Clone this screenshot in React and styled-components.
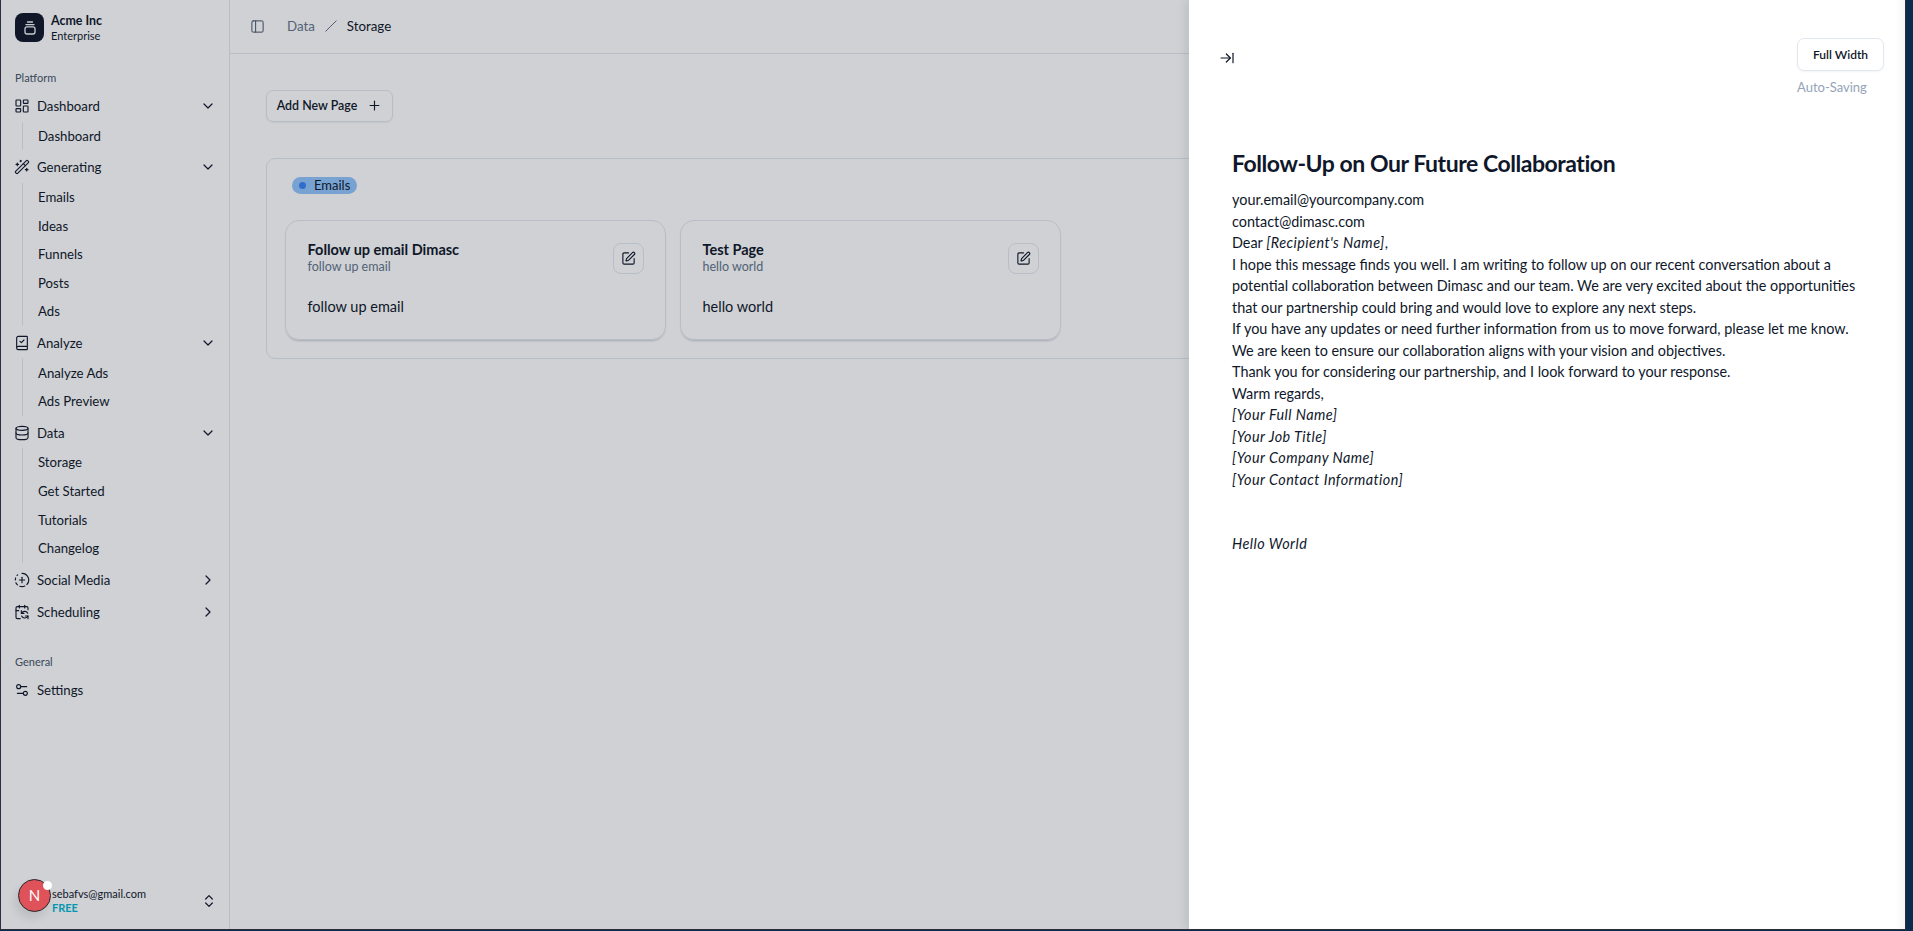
import React from 'react';
import styled, { createGlobalStyle } from 'styled-components';
import {
  LayoutDashboard, WandSparkles, BookCheck, Database, CircleFadingPlus, CalendarSync, Settings2,
  ChevronDown, ChevronRight, ChevronsUpDown, PanelLeft, Plus, SquarePen, ArrowRightToLine,
} from 'lucide-react';

const FONT = `"Lato", "Noto Sans", sans-serif`;

const nav = [
  { label: 'Dashboard', icon: LayoutDashboard, open: true, items: ['Dashboard'] },
  { label: 'Generating', icon: WandSparkles, open: true, items: ['Emails', 'Ideas', 'Funnels', 'Posts', 'Ads'] },
  { label: 'Analyze', icon: BookCheck, open: true, items: ['Analyze Ads', 'Ads Preview'] },
  { label: 'Data', icon: Database, open: true, items: ['Storage', 'Get Started', 'Tutorials', 'Changelog'] },
  { label: 'Social Media', icon: CircleFadingPlus },
  { label: 'Scheduling', icon: CalendarSync },
];

const pages = [
  { title: 'Follow up email Dimasc', sub: 'follow up email', body: 'follow up email' },
  { title: 'Test Page', sub: 'hello world', body: 'hello world' },
];

const Global = createGlobalStyle`
  html, body { margin: 0; padding: 0; height: 100%; overflow: hidden; }
  body { font-family: ${FONT}; color: #0f172a; background: #0b2b4d; }
  #root { height: 100%; }
`;

const Desktop = styled.div`
  width: 1913px;
  height: 931px;
  box-sizing: border-box;
  padding: 0 7px 1px 0;
  background: #0b2b4d;
`;

const Window = styled.div`
  position: relative;
  height: 100%;
  box-sizing: border-box;
  display: flex;
  overflow: hidden;
  background: #fff;
  border: solid #2b2f3f;
  border-width: 0 1px 1px 1px;
`;

const Sidebar = styled.aside`
  flex: 0 0 229px;
  box-sizing: border-box;
  border-right: 1px solid #e2e8f0;
  padding: 13px 0 0 14px;
  display: flex;
  flex-direction: column;
`;

const Brand = styled.div`
  display: flex;
  align-items: center;
  gap: 7px;
  height: 29px;
`;

const BrandMark = styled.div`
  width: 29px;
  height: 29px;
  border-radius: 8px;
  background: #0f172a;
  color: #f8fafc;
  display: flex;
  align-items: center;
  justify-content: center;
`;

const BrandText = styled.div`
  display: flex;
  flex-direction: column;
  line-height: 15px;
  b { font-size: 12.4px; font-weight: 700; }
  span { font-size: 11px; }
`;

const GroupLabel = styled.div`
  font-size: 11px;
  line-height: 14px;
  color: #475569;
  margin-top: ${p => p.$top}px;
  margin-bottom: 6px;
`;

const NavRow = styled.div`
  height: 30px;
  width: 202px;
  margin: 0 0 2.6px -1px;
  display: flex;
  align-items: center;
  gap: 7px;
  font-size: 13.2px;
  color: #0f172a;
  span { flex: 1; }
`;

const SubList = styled.div`
  margin: -2px 0 2px 7px;
  border-left: 1px solid #e2e8f0;
  padding-left: 15px;
`;

const SubItem = styled.div`
  height: 28.6px;
  display: flex;
  align-items: center;
  font-size: 13.2px;
  color: #0f172a;
`;

const User = styled.div`
  margin-top: auto;
  height: 37px;
  width: 202px;
  margin-bottom: 10px;
  display: flex;
  align-items: center;
`;

/* the avatar floats above the dimming layer, it stays bright in the reference */
const Avatar = styled.div`
  position: relative;
  z-index: 1;
  flex: 0 0 33px;
  width: 33px;
  height: 33px;
  margin: -11px 0 0 3px;
  box-sizing: border-box;
  border-radius: 50%;
  background: #e0525a;
  border: 1px solid #27272a;
  color: #fff;
  font-size: 15px;
  display: flex;
  align-items: center;
  justify-content: center;
  box-shadow: -3px 6px 8px rgba(15, 23, 42, .1);
  &::after {
    content: '';
    position: absolute;
    top: 1px;
    right: -2px;
    width: 9px;
    height: 9px;
    border-radius: 50%;
    background: #fff;
  }
`;

const UserText = styled.div`
  flex: 1;
  display: flex;
  flex-direction: column;
  margin-left: 1px;
  line-height: 14px;
  font-size: 11px;
  b { color: #06b6d4; font-weight: 700; font-size: 11px; }
`;

const Main = styled.main`
  flex: 1;
  display: flex;
  flex-direction: column;
`;

const TopBar = styled.header`
  height: 53px;
  flex: none;
  border-bottom: 1px solid #e2e8f0;
  display: flex;
  align-items: center;
  padding-left: 20px;
  font-size: 13.3px;
`;

const Crumbs = styled.nav`
  margin-left: 22px;
  margin-top: -1px;
  display: flex;
  align-items: center;
  gap: 10px;
  color: #64748b;
  strong { font-weight: 400; color: #0f172a; }
`;

const Content = styled.div`
  padding: 36px 0 0 36px;
`;

const AddButton = styled.button`
  font: 600 12.4px ${FONT};
  color: #0f172a;
  height: 31.5px;
  width: 127px;
  border: 1px solid #e2e8f0;
  border-radius: 7px;
  background: #fff;
  display: flex;
  align-items: center;
  justify-content: center;
  gap: 10px;
  padding: 0;
  box-shadow: 0 1px 2px rgba(15, 23, 42, .05);
`;

const Section = styled.section`
  margin-top: 36px;
  border: 1px solid #e2e8f0;
  border-radius: 9px;
  height: 201px;
  box-sizing: border-box;
  padding: 18px 18px 0;
`;

const Tag = styled.div`
  display: flex;
  width: fit-content;
  align-items: center;
  gap: 8px;
  height: 17px;
  padding: 0 7px;
  margin-left: 7px;
  border-radius: 9px;
  background: #93c5fd;
  font-size: 13px;
  &::before {
    content: '';
    width: 7px;
    height: 7px;
    border-radius: 50%;
    background: #3b82f6;
  }
`;

const Cards = styled.div`
  margin-top: 26px;
  display: flex;
  gap: 14px;
`;

const Card = styled.article`
  box-sizing: border-box;
  width: 381px;
  height: 120px;
  border: 1px solid #e2e8f0;
  border-radius: 14px;
  padding: 21px 21.5px 0;
  box-shadow: 0 2px 2px -1px rgba(15, 23, 42, .22);
`;

const CardHead = styled.div`
  display: flex;
  justify-content: space-between;
  align-items: center;
`;

const CardTitle = styled.div`
  font-size: 14.5px;
  font-weight: 700;
  line-height: 16px;
  small {
    display: block;
    font-size: 12.5px;
    font-weight: 400;
    color: #64748b;
    line-height: 17px;
  }
`;

const IconButton = styled.div`
  width: 31px;
  height: 31px;
  box-sizing: border-box;
  border: 1px solid #e2e8f0;
  border-radius: 8px;
  display: flex;
  align-items: center;
  justify-content: center;
`;

const CardBody = styled.p`
  margin: 23px 0 0;
  font-size: 14.5px;
  line-height: 18px;
`;

const Overlay = styled.div`
  position: absolute;
  inset: 0;
  background: rgba(15, 23, 42, .2);
`;

const Sheet = styled.aside`
  position: absolute;
  top: 0;
  bottom: 0;
  right: 0;
  width: 716px;
  box-sizing: border-box;
  background: #fff;
  box-shadow: -3px 0 10px rgba(15, 23, 42, .1), inset -12px 0 10px -10px rgba(15, 23, 42, .07);
  padding: 38px 21px 0 30px;
`;

const SheetBar = styled.div`
  display: flex;
  justify-content: space-between;
  align-items: flex-start;
  svg { margin-top: 11.5px; }
`;

const SheetActions = styled.div`
  display: flex;
  flex-direction: column;
`;

const WidthButton = styled.button`
  font: 600 12px ${FONT};
  color: #0f172a;
  width: 87px;
  height: 33px;
  background: #fff;
  border: 1px solid #e2e8f0;
  border-radius: 7px;
  padding: 0;
  box-shadow: 0 1px 2px rgba(15, 23, 42, .05);
`;

const Saving = styled.div`
  font-size: 13px;
  line-height: 16px;
  margin-top: 8px;
  color: #94a3b8;
`;

const Doc = styled.article`
  margin: 52px 0 0 13px;
  width: 640px;
  font-size: 14.4px;
  line-height: 21.5px;
  h1 {
    font-size: 23px;
    letter-spacing: -.45px;
    line-height: 32px;
    font-weight: 700;
    margin: 0 0 10px;
  }
  p { margin: 0; }
  em { font-style: italic; letter-spacing: .45px; }
`;

const Spacer = styled.div`
  height: 43px;
`;

const BrandIcon = () => (
  <svg width="16" height="16" viewBox="0 0 16 16" fill="none" stroke="currentColor" strokeWidth="1.3" strokeLinecap="round">
    <path d="M5.5 2h5" />
    <path d="M4 4.6h8" />
    <rect x="3" y="6.8" width="10" height="7.2" rx="2" />
  </svg>
);

export default function App() {
  return (
    <Desktop>
      <Global />
      <Window>
        <Sidebar>
          <Brand>
            <BrandMark><BrandIcon /></BrandMark>
            <BrandText><b>Acme Inc</b><span>Enterprise</span></BrandText>
          </Brand>
          <GroupLabel $top={29}>Platform</GroupLabel>
          {nav.map(group => (
            <React.Fragment key={group.label}>
              <NavRow>
                <group.icon size={16} strokeWidth={1.7} />
                <span>{group.label}</span>
                {group.open ? <ChevronDown size={16} strokeWidth={1.8} /> : <ChevronRight size={16} strokeWidth={1.8} />}
              </NavRow>
              {group.items && (
                <SubList>
                  {group.items.map(item => <SubItem key={item}>{item}</SubItem>)}
                </SubList>
              )}
            </React.Fragment>
          ))}
          <GroupLabel $top={25.7}>General</GroupLabel>
          <NavRow><Settings2 size={16} strokeWidth={1.7} /><span>Settings</span></NavRow>
          <User>
            <Avatar>N</Avatar>
            <UserText>sebafvs@gmail.com<b>FREE</b></UserText>
            <ChevronsUpDown size={16} strokeWidth={1.8} />
          </User>
        </Sidebar>
        <Main>
          <TopBar>
            <PanelLeft size={15} strokeWidth={1.6} color="#475569" />
            <Crumbs>
              <span>Data</span>
              <svg width="12" height="12" viewBox="0 0 12 12"><path d="M0.5 11.5 L11.5 0.5" stroke="#64748b" strokeWidth="1" /></svg>
              <strong>Storage</strong>
            </Crumbs>
          </TopBar>
          <Content>
            <AddButton>Add New Page <Plus size={15} strokeWidth={1.8} /></AddButton>
            <Section>
              <Tag>Emails</Tag>
              <Cards>
                {pages.map(page => (
                  <Card key={page.title}>
                    <CardHead>
                      <CardTitle>{page.title}<small>{page.sub}</small></CardTitle>
                      <IconButton><SquarePen size={15} strokeWidth={1.8} /></IconButton>
                    </CardHead>
                    <CardBody>{page.body}</CardBody>
                  </Card>
                ))}
              </Cards>
            </Section>
          </Content>
        </Main>
        <Overlay />
        <Sheet>
          <SheetBar>
            <ArrowRightToLine size={16} strokeWidth={1.8} />
            <SheetActions>
              <WidthButton>Full Width</WidthButton>
              <Saving>Auto-Saving</Saving>
            </SheetActions>
          </SheetBar>
          <Doc>
            <h1>Follow-Up on Our Future Collaboration</h1>
            <p>your.email@yourcompany.com</p>
            <p>contact@dimasc.com</p>
            <p>Dear <em>[Recipient's Name]</em>,</p>
            <p>I hope this message finds you well. I am writing to follow up on our recent conversation about a potential collaboration between Dimasc and our team. We are very excited about the opportunities that our partnership could bring and would love to explore any next steps.</p>
            <p>If you have any updates or need further information from us to move forward, please let me know. We are keen to ensure our collaboration aligns with your vision and objectives.</p>
            <p>Thank you for considering our partnership, and I look forward to your response.</p>
            <p>Warm regards,</p>
            <p><em>[Your Full Name]</em></p>
            <p><em>[Your Job Title]</em></p>
            <p><em>[Your Company Name]</em></p>
            <p><em>[Your Contact Information]</em></p>
            <Spacer />
            <p><em>Hello World</em></p>
          </Doc>
        </Sheet>
      </Window>
    </Desktop>
  );
}
